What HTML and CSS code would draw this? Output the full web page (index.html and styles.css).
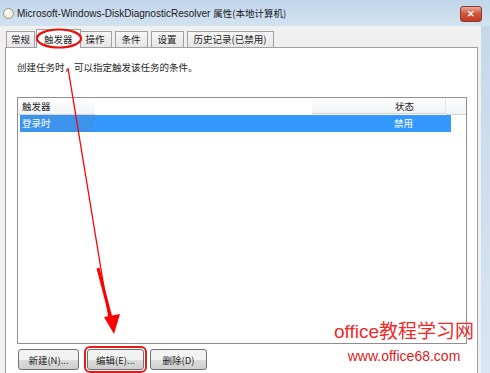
FILE: index.html
```html
<!DOCTYPE html>
<html>

<head>
    <link rel="stylesheet" href="styles.css">
</head>

<body>
    <div class="window">
        <div class="titlebar">
            <span class="title-icon"></span>
            <span class="title">Microsoft-Windows-DiskDiagnosticResolver <span class="cjk">属性(本地计算机)</span></span>
            <span class="close">&#x2715;</span>
        </div>

        <div class="client">
            <div class="tabs">
                <div class="tab">常规</div>
                <div class="tab active">触发器</div>
                <div class="tab">操作</div>
                <div class="tab">条件</div>
                <div class="tab">设置</div>
                <div class="tab">历史记录(已禁用)</div>
            </div>

            <div class="panel">
                <p class="hint">创建任务时，可以指定触发该任务的条件。</p>

                <div class="listbox">
                    <div class="list-head">
                        <div class="col-a">触发器</div>
                        <div class="col-gap"></div>
                        <div class="col-b">状态</div>
                        <div class="col-c"></div>
                    </div>
                    <div class="list-row">
                        <div class="col-a">登录时</div>
                        <div class="col-gap"></div>
                        <div class="col-b">禁用</div>
                    </div>
                </div>

                <div class="buttons">
                    <button class="btn btn-new">新建(N)...</button>
                    <button class="btn marked">编辑(E)...</button>
                    <button class="btn btn-del">删除(D)</button>
                </div>
            </div>
        </div>
    </div>

    <svg class="marks" width="490" height="373" viewBox="0 0 490 373">
        <ellipse cx="59" cy="38.5" rx="22" ry="9" fill="none" stroke="#e8120c" stroke-width="2.2"/>
        <path d="M68 68 L109 318" stroke="#ff0000" stroke-width="1.3" fill="none"/>
        <path d="M98 268 L111 318" stroke="#ff0000" stroke-width="3" fill="none"/>
        <polygon points="104,317 120,314 114,334" fill="#ff0000"/>
    </svg>

    <div class="watermark">
        <div class="wm-big">office教程学习网</div>
        <div class="wm-small">www.office68.com</div>
    </div>
</body>

</html>
```

FILE: styles.css
```css
body {
    margin: 0;
    width: 490px;
    height: 373px;
    overflow: hidden;
    position: relative;
    font-family: "Noto Sans CJK SC", "Liberation Sans", sans-serif;
    font-size: 9.5px;
    color: #1e1e1e;
}

.window {
    display: flex;
    flex-direction: column;
    height: 373px;
    background: linear-gradient(to bottom, #c4d7eb, #d8e5f2);
}

.titlebar {
    height: 26px;
    display: flex;
    align-items: center;
    padding: 0 8px 0 3px;
    background: linear-gradient(to bottom, #c1d5ea, #d3e2f1);
}

.title-icon {
    width: 9px;
    height: 9px;
    border-radius: 50%;
    border: 1px solid #9a9a8a;
    background: radial-gradient(circle at 40% 40%, #ffffff, #e6dcb8);
    margin-right: 3px;
}

.title {
    flex: 1;
    font-family: "Liberation Sans", "Noto Sans CJK SC", sans-serif;
    font-size: 10px;
    color: #1a1a1a;
}

.title .cjk {
    font-family: "Noto Sans CJK SC", sans-serif;
    font-size: 9.5px;
}

.close {
    width: 20px;
    height: 14px;
    display: flex;
    align-items: center;
    justify-content: center;
    margin-top: 1px;
    border: 1px solid #8a3a2e;
    border-radius: 3px;
    background: linear-gradient(to bottom, #e9a99a, #d0533a 50%, #c23a20);
    color: #fff;
    font-size: 9px;
    font-weight: bold;
}

.client {
    flex: 1;
    display: flex;
    flex-direction: column;
    margin-right: 9px;
    padding: 3px 3px 0 5px;
    background: #f0f0f0;
}

.tabs {
    display: flex;
    align-items: flex-end;
    height: 18px;
    padding-left: 1px;
}

.tab {
    height: 15px;
    line-height: 15px;
    padding: 0 6px;
    margin-right: 3px;
    border: 1px solid #a0a0a0;
    border-bottom: none;
    background: linear-gradient(to bottom, #f6f6f6, #e6e6e6);
    white-space: nowrap;
}

.tab:first-child {
    padding: 0 4px;
}

.tab.active {
    height: 18px;
    line-height: 18px;
    margin: 0 0 -1px -2px;
    padding: 0 7px;
    background: #ffffff;
    position: relative;
}

.tab.active + .tab {
    margin-left: -2px;
}

.panel {
    flex: 1;
    display: flex;
    flex-direction: column;
    background: #ffffff;
    border: 1px solid #a0a0a0;
    border-bottom: none;
    padding: 0 10px 0 11px;
}

.hint {
    margin: 12px 0 0 0;
    height: 16px;
}

.listbox {
    margin-top: 21px;
    height: 245px;
    border: 1px solid #8f8f8f;
    background: #ffffff;
}

.list-head,
.list-row {
    display: flex;
    height: 17px;
    line-height: 17px;
}

.list-head .col-a,
.list-head .col-b,
.list-head .col-c {
    background: linear-gradient(to bottom, #ffffff, #f2f3f5);
    border-bottom: 1px solid #d5d5d5;
    height: 16px;
}

.list-head .col-b {
    border-right: 1px solid #e2e3e4;
}

.col-a {
    width: 73px;
    padding-left: 4px;
}

.col-gap {
    width: 217px;
}

.col-b {
    width: 134px;
    padding-left: 83px;
    box-sizing: border-box;
}

.col-c {
    flex: 1;
}

.list-head .col-gap {
    background: #ffffff;
}

.list-row {
    margin-left: 2px;
    width: 431px;
    background: #3399ff;
    color: #ffffff;
}

.list-row .col-a {
    width: 72px;
    padding-left: 2px;
    background: #3b93ec;
}

.buttons {
    display: flex;
    margin-top: 5px;
    padding-left: 1px;
}

.btn {
    height: 21px;
    width: 57px;
    padding: 0;
    white-space: nowrap;
    border: 1px solid #707070;
    border-radius: 3px;
    background: linear-gradient(to bottom, #f2f2f2 50%, #dddddd 51%, #cfcfcf);
    font-family: "Noto Sans CJK SC", "Liberation Sans", sans-serif;
    font-size: 9.5px;
    color: #1e1e1e;
}

.btn-new {
    width: 61px;
}

.btn.marked {
    margin-left: 8px;
    outline: 2px solid #e31b1b;
    outline-offset: 1px;
}

.btn-del {
    margin-left: 6px;
}

.marks {
    position: absolute;
    left: 0;
    top: 0;
}

.watermark {
    position: absolute;
    left: 334px;
    top: 319px;
    color: #ef2a2a;
    text-align: center;
}

.wm-big {
    font-family: "Liberation Sans", "Noto Sans CJK SC", sans-serif;
    font-size: 19px;
    line-height: 26px;
}

.wm-small {
    font-family: "Liberation Sans", sans-serif;
    font-size: 14px;
    line-height: 22px;
    color: #e02020;
}
```
